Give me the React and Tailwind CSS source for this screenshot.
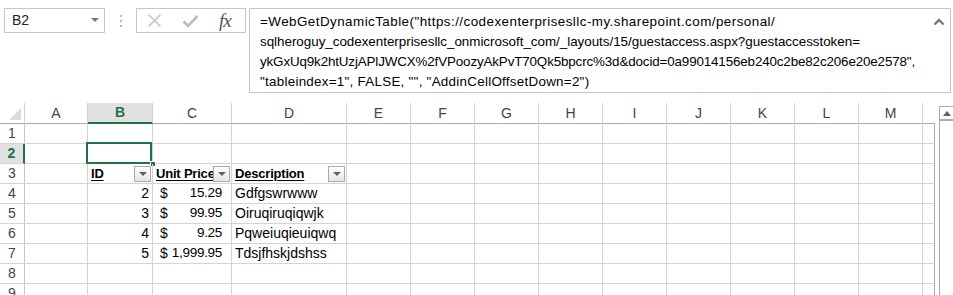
const letters = ["A", "B", "C", "D", "E", "F", "G", "H", "I", "J", "K", "L", "M", ""];

const rows = [
  { n: 1 },
  { n: 2 },
  { n: 3, head: true },
  { n: 4, id: "2", price: "15.29", desc: "Gdfgswrwww" },
  { n: 5, id: "3", price: "99.95", desc: "Oiruqiruqiqwjk" },
  { n: 6, id: "4", price: "9.25", desc: "Pqweiuqieuiqwq" },
  { n: 7, id: "5", price: "1,999.95", desc: "Tdsjfhskjdshss" },
  { n: 8 },
  { n: 9 },
];

const formula = [
  { t: '=WebGetDynamicTable("https://codexenterprisesllc-my.sharepoint.com/personal/', c: "tracking-[0.46px]" },
  { t: "sqlheroguy_codexenterprisesllc_onmicrosoft_com/_layouts/15/guestaccess.aspx?guestaccesstoken=", c: "tracking-[-0.02px]" },
  { t: 'ykGxUq9k2htUzjAPlJWCX%2fVPoozyAkPvT70Qk5bpcrc%3d&docid=0a99014156eb240c2be82c206e20e2578",', c: "tracking-[-0.14px]" },
  { t: '"tableindex=1", FALSE, "", "AddinCellOffsetDown=2")', c: "tracking-[0.27px]" },
];

function FilterButton() {
  return (
    <div className="absolute right-[1px] top-[2px] w-[17px] h-[16px] border border-[#a9a9a9] bg-gradient-to-b from-white to-[#e6e6e6] flex items-center justify-center">
      <svg width="8" height="5" viewBox="0 0 8 5">
        <polygon points="0,0 8,0 4,4" fill="#606060" />
      </svg>
    </div>
  );
}

function HeaderCell({ text }) {
  return (
    <div className="relative h-[20px] border-r border-b border-[#d4d4d4] flex items-center pl-[3px]">
      <span className="text-[13px] font-bold underline underline-offset-2 decoration-1 whitespace-nowrap tracking-[-0.2px]">
        {text}
      </span>
      <FilterButton />
    </div>
  );
}

function Cell({ children, className = "" }) {
  return (
    <div className={`h-[20px] border-r border-b border-[#d4d4d4] flex items-center whitespace-nowrap overflow-hidden ${className}`}>
      {children}
    </div>
  );
}

function RowCells({ row }) {
  if (row.head) {
    return (
      <>
        <Cell />
        <HeaderCell text="ID" />
        <HeaderCell text="Unit Price" />
        <HeaderCell text="Description" />
      </>
    );
  }
  if (row.id) {
    return (
      <>
        <Cell />
        <Cell className="justify-end pr-[3px]">{row.id}</Cell>
        <Cell className="justify-between pl-[7px] pr-[9px]">
          <span>$</span>
          <span className="text-[13.5px] tracking-[-0.3px]">{row.price}</span>
        </Cell>
        <Cell className="pl-[3px]">{row.desc}</Cell>
      </>
    );
  }
  return (
    <>
      <Cell />
      {row.n === 2 ? (
        <Cell className="relative overflow-visible">
          <div className="absolute left-[-2px] top-[-2px] w-[66px] h-[22px] border-2 border-[#217346]" />
          <div className="absolute right-[-4px] bottom-[-4px] w-[6px] h-[6px] bg-[#217346] border border-white" />
        </Cell>
      ) : (
        <Cell />
      )}
      <Cell />
      <Cell />
    </>
  );
}

export default function App() {
  return (
    <div
      className="w-[953px] h-[295px] overflow-hidden bg-white text-[14px] text-black"
      style={{ fontFamily: '"Liberation Sans", Arial, sans-serif' }}
    >
      {/* formula bar */}
      <div className="h-[103px] flex items-start pt-[8px] pl-[4px]">
        <div className="w-[101px] h-[25px] border border-[#c6c6c6] flex items-center justify-between pl-[7px] pr-[5px]">
          <span className="text-[14px] text-[#222]">B2</span>
          <svg width="8" height="5" viewBox="0 0 8 5">
            <polygon points="0,0 8,0 4,4" fill="#777" />
          </svg>
        </div>
        <div className="w-[31px] h-[25px] flex flex-col items-center justify-center gap-[3px]">
          <div className="w-[2px] h-[2px] bg-[#bbb]" />
          <div className="w-[2px] h-[2px] bg-[#bbb]" />
          <div className="w-[2px] h-[2px] bg-[#bbb]" />
        </div>
        <div className="w-[110px] h-[25px] border border-[#c6c6c6] flex items-center pl-[10px] gap-[20px]">
          <svg width="15" height="15" viewBox="0 0 15 15">
            <path d="M1.5 1.5 L13.5 13.5 M13.5 1.5 L1.5 13.5" stroke="#c4c4c4" strokeWidth="1.6" />
          </svg>
          <svg width="17" height="14" viewBox="0 0 17 14">
            <path d="M1.5 7.5 L6 12 L15.5 2" stroke="#bcbcbc" strokeWidth="2.6" fill="none" />
          </svg>
          <span
            className="italic text-[19px] leading-none text-[#555] tracking-[-1px]"
            style={{ fontFamily: '"Liberation Serif", "Times New Roman", serif' }}
          >
            fx
          </span>
        </div>
        <div className="ml-[3px] w-[702px] h-[85px] border border-[#c6c6c6] flex justify-between pl-[10px] pt-[3px] pr-[5px]">
          <div className="text-[13.4px] leading-[20px] text-black">
            {formula.map((l) => (
              <div key={l.t} className={`whitespace-nowrap ${l.c}`}>
                {l.t}
              </div>
            ))}
          </div>
          <svg width="12" height="8" viewBox="0 0 12 8" className="mt-[6px]">
            <path d="M1.5 6.5 L6 2 L10.5 6.5" stroke="#777" strokeWidth="2.4" fill="none" />
          </svg>
        </div>
      </div>

      {/* sheet */}
      <div className="flex items-start">
        <div className="grid grid-cols-[25px_63px_65px_79px_115px_repeat(9,64px)_12px] w-[935px]">
          {/* column headers */}
          <div className="h-[21px] border-r border-b border-r-[#d4d4d4] border-b-[#ababab] flex items-end justify-end pr-[3px] pb-[3px]">
            <svg width="12" height="12" viewBox="0 0 12 12">
              <polygon points="12,0 12,12 0,12" fill="#dcdcdc" />
            </svg>
          </div>
          {letters.map((c, i) =>
            c === "B" ? (
              <div
                key={i}
                className="h-[21px] bg-[#e1e1e1] border-r border-r-[#d4d4d4] border-b-2 border-b-[#217346] flex items-center justify-center font-bold text-[#217346]"
              >
                {c}
              </div>
            ) : (
              <div
                key={i}
                className={`h-[21px] border-b border-b-[#ababab] flex items-center justify-center text-[#444] ${
                  c ? "border-r border-r-[#d4d4d4]" : ""
                }`}
              >
                {c}
              </div>
            )
          )}

          {rows.map((row) => (
            <RowFragment key={row.n} row={row} />
          ))}
        </div>

        {/* vertical scrollbar */}
        <div className="ml-[4px] mt-[3px] w-[14px] h-[200px] border-l border-t border-[#ababab]">
          <div className="h-[14px] border-b-2 border-[#ababab] flex items-center justify-center">
            <svg width="8" height="5" viewBox="0 0 8 5">
              <polygon points="0,5 8,5 4,0" fill="#606060" />
            </svg>
          </div>
        </div>
      </div>
    </div>
  );
}

function RowFragment({ row }) {
  const selected = row.n === 2;
  return (
    <>
      <div
        className={`h-[20px] border-b border-[#d4d4d4] flex items-center justify-center ${
          selected
            ? "bg-[#e1e1e1] font-bold text-[#217346] border-r-2 border-r-[#217346]"
            : "text-[#444] border-r border-r-[#c6c6c6]"
        }`}
      >
        {row.n}
      </div>
      <RowCells row={row} />
      {Array.from({ length: 9 }).map((_, i) => (
        <Cell key={i} />
      ))}
      <Cell className="border-r-[#ababab]" />
    </>
  );
}
